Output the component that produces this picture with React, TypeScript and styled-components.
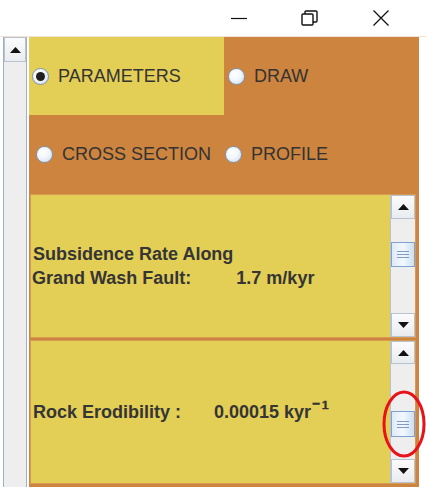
import React from 'react';
import styled, { createGlobalStyle } from 'styled-components';

const YELLOW = '#e3ce56';
const ORANGE = '#cd843e';

const GlobalStyle = createGlobalStyle`
  html, body {
    margin: 0;
    padding: 0;
    background: #ffffff;
  }
  body {
    font-family: 'Liberation Sans', Arial, sans-serif;
  }
`;

const Window = styled.div`
  position: relative;
  width: 426px;
  height: 487px;
  overflow: hidden;
  display: flex;
  flex-direction: column;
  background: #ffffff;
`;

const TitleBar = styled.div`
  height: 36px;
  flex: none;
  display: flex;
  justify-content: flex-end;
  align-items: center;
  padding-right: 10px;
  border-bottom: 1px solid #f1e4d6;
`;

const CaptionButton = styled.div`
  width: 71px;
  height: 36px;
  display: flex;
  align-items: center;
  justify-content: center;
  color: #111;
`;

const Body = styled.div`
  flex: 1;
  min-height: 0;
  display: flex;
`;

const SideBar = styled.div`
  width: 24px;
  box-sizing: border-box;
  margin-left: 3px;
  margin-right: 2px;
  display: flex;
  flex-direction: column;
  border-left: 1px solid #9fb0c4;
  border-right: 1px solid #9fb0c4;
  background: #eeeeee;
`;

const ArrowButton = styled.div<{ $h: number }>`
  height: ${(p) => p.$h}px;
  flex: none;
  display: flex;
  align-items: center;
  justify-content: center;
  box-sizing: border-box;
  border: 1px solid #b9c3cf;
  background: linear-gradient(#fbfbfb, #e9ecef);
`;

const Track = styled.div`
  flex: 1;
  background: #eeeeee;
`;

const Thumb = styled.div<{ $top: number; $h: number }>`
  margin-top: ${(p) => p.$top}px;
  height: ${(p) => p.$h}px;
  box-sizing: border-box;
  border: 1px solid #7fa3d0;
  background: linear-gradient(90deg, #dfeaf7, #f3f8fd 50%, #cddff2);
  display: flex;
  flex-direction: column;
  align-items: center;
  justify-content: center;
  gap: 2px;
`;

const Grip = styled.span`
  width: 12px;
  height: 1px;
  background: #7f9cc6;
`;

const Content = styled.div`
  width: 390px;
  background: ${ORANGE};
  display: flex;
  flex-direction: column;
`;

const TopRow = styled.div`
  height: 78px;
  flex: none;
  display: grid;
  grid-template-columns: 1fr 1fr;
`;

const Cell = styled.div<{ $bg: string; $pad: number }>`
  background: ${(p) => p.$bg};
  display: flex;
  align-items: center;
  padding-left: ${(p) => p.$pad}px;
`;

const SecondRow = styled.div`
  height: 79px;
  flex: none;
  display: flex;
  align-items: center;
  padding-left: 7px;
  gap: 14px;
`;

const Option = styled.label`
  display: flex;
  align-items: center;
  gap: 9px;
  font-size: 18px;
  color: #333333;
  white-space: nowrap;
`;

const RadioCircle = styled.span<{ $on?: boolean }>`
  width: 17px;
  height: 17px;
  box-sizing: border-box;
  border-radius: 50%;
  border: 1px solid #7d95b3;
  background: radial-gradient(circle at 40% 35%, #ffffff 0%, #f2f6fb 45%, #c7d6e9 100%);
  display: flex;
  align-items: center;
  justify-content: center;
  &::after {
    content: '';
    display: ${(p) => (p.$on ? 'block' : 'none')};
    width: 9px;
    height: 9px;
    border-radius: 50%;
    background: #1f1f1f;
  }
`;

const Panel = styled.div`
  height: 144px;
  flex: none;
  box-sizing: border-box;
  margin: 0 3px 2px 1px;
  border: 1px solid #d79a52;
  background: ${YELLOW};
  display: flex;
`;

const PanelText = styled.div`
  flex: 1;
  display: flex;
  flex-direction: column;
  justify-content: center;
  padding-left: 1px;
  font-size: 18px;
  line-height: 24px;
  font-weight: bold;
  color: #353535;
  white-space: nowrap;
`;

const Line = styled.div<{ $indent?: number }>`
  display: flex;
  align-items: baseline;
  padding-left: ${(p) => p.$indent ?? 0}px;
`;

const Value = styled.span<{ $gap: number }>`
  margin-left: ${(p) => p.$gap}px;
`;

const Sup = styled.span`
  font-size: 24px;
  line-height: 0;
  letter-spacing: 1px;
  margin-left: 1px;
`;

const PanelBar = styled.div`
  width: 24px;
  flex: none;
  display: flex;
  flex-direction: column;
  background: #eeeeee;
  border-left: 1px solid #b9c3cf;
`;

const Marker = styled.svg`
  position: absolute;
  left: 382px;
  top: 390px;
`;

const Up = () => (
  <svg width="11" height="6" viewBox="0 0 11 6">
    <path d="M0 6 L5.5 0 L11 6 Z" fill="#111" />
  </svg>
);

const Down = () => (
  <svg width="11" height="6" viewBox="0 0 11 6">
    <path d="M0 0 L5.5 6 L11 0 Z" fill="#111" />
  </svg>
);

const ScrollBar = ({ top, h, upH }: { top: number; h: number; upH: number }) => (
  <PanelBar>
    <ArrowButton $h={upH}>
      <Up />
    </ArrowButton>
    <Track>
      <Thumb $top={top} $h={h}>
        <Grip />
        <Grip />
        <Grip />
      </Thumb>
    </Track>
    <ArrowButton $h={24}>
      <Down />
    </ArrowButton>
  </PanelBar>
);

const Radio = ({ label, on }: { label: string; on?: boolean }) => (
  <Option>
    <RadioCircle $on={on} />
    {label}
  </Option>
);

export default function App() {
  return (
    <>
      <GlobalStyle />
      <Window>
        <TitleBar>
          <CaptionButton>
            <svg width="16" height="16" viewBox="0 0 16 16">
              <line x1="0" y1="8.5" x2="16" y2="8.5" stroke="#111" strokeWidth="1.2" />
            </svg>
          </CaptionButton>
          <CaptionButton>
            <svg width="17" height="16" viewBox="0 0 17 16">
              <rect x="1" y="4" width="11" height="11" rx="1" fill="none" stroke="#111" strokeWidth="1.4" />
              <path d="M4 4 V2 a1 1 0 0 1 1 -1 H15 a1 1 0 0 1 1 1 V11 a1 1 0 0 1 -1 1 H12" fill="none" stroke="#111" strokeWidth="1.4" />
            </svg>
          </CaptionButton>
          <CaptionButton>
            <svg width="16" height="16" viewBox="0 0 16 16">
              <path d="M0.5 0.5 L15.5 15.5 M15.5 0.5 L0.5 15.5" stroke="#111" strokeWidth="1.3" />
            </svg>
          </CaptionButton>
        </TitleBar>
        <Body>
          <SideBar>
            <ArrowButton $h={25}>
              <Up />
            </ArrowButton>
            <Track />
          </SideBar>
          <Content>
            <TopRow>
              <Cell $bg={YELLOW} $pad={3}>
                <Radio label="PARAMETERS" on />
              </Cell>
              <Cell $bg={ORANGE} $pad={4}>
                <Radio label="DRAW" />
              </Cell>
            </TopRow>
            <SecondRow>
              <Radio label="CROSS SECTION" />
              <Radio label="PROFILE" />
            </SecondRow>
            <Panel>
              <PanelText>
                <Line $indent={1}>Subsidence Rate Along</Line>
                <Line>
                  Grand Wash Fault:<Value $gap={45}>1.7 m/kyr</Value>
                </Line>
              </PanelText>
              <ScrollBar upH={24} top={23} h={25} />
            </Panel>
            <Panel>
              <PanelText>
                <Line $indent={1}>
                  Rock Erodibility :
                  <Value $gap={33}>
                    0.00015 kyr<Sup>⁻¹</Sup>
                  </Value>
                </Line>
              </PanelText>
              <ScrollBar upH={23} top={47} h={26} />
            </Panel>
          </Content>
        </Body>
        <Marker width="44" height="68" viewBox="0 0 44 68">
          <ellipse cx="22" cy="34" rx="20" ry="32" fill="none" stroke="#e8121b" strokeWidth="3" />
        </Marker>
      </Window>
    </>
  );
}
